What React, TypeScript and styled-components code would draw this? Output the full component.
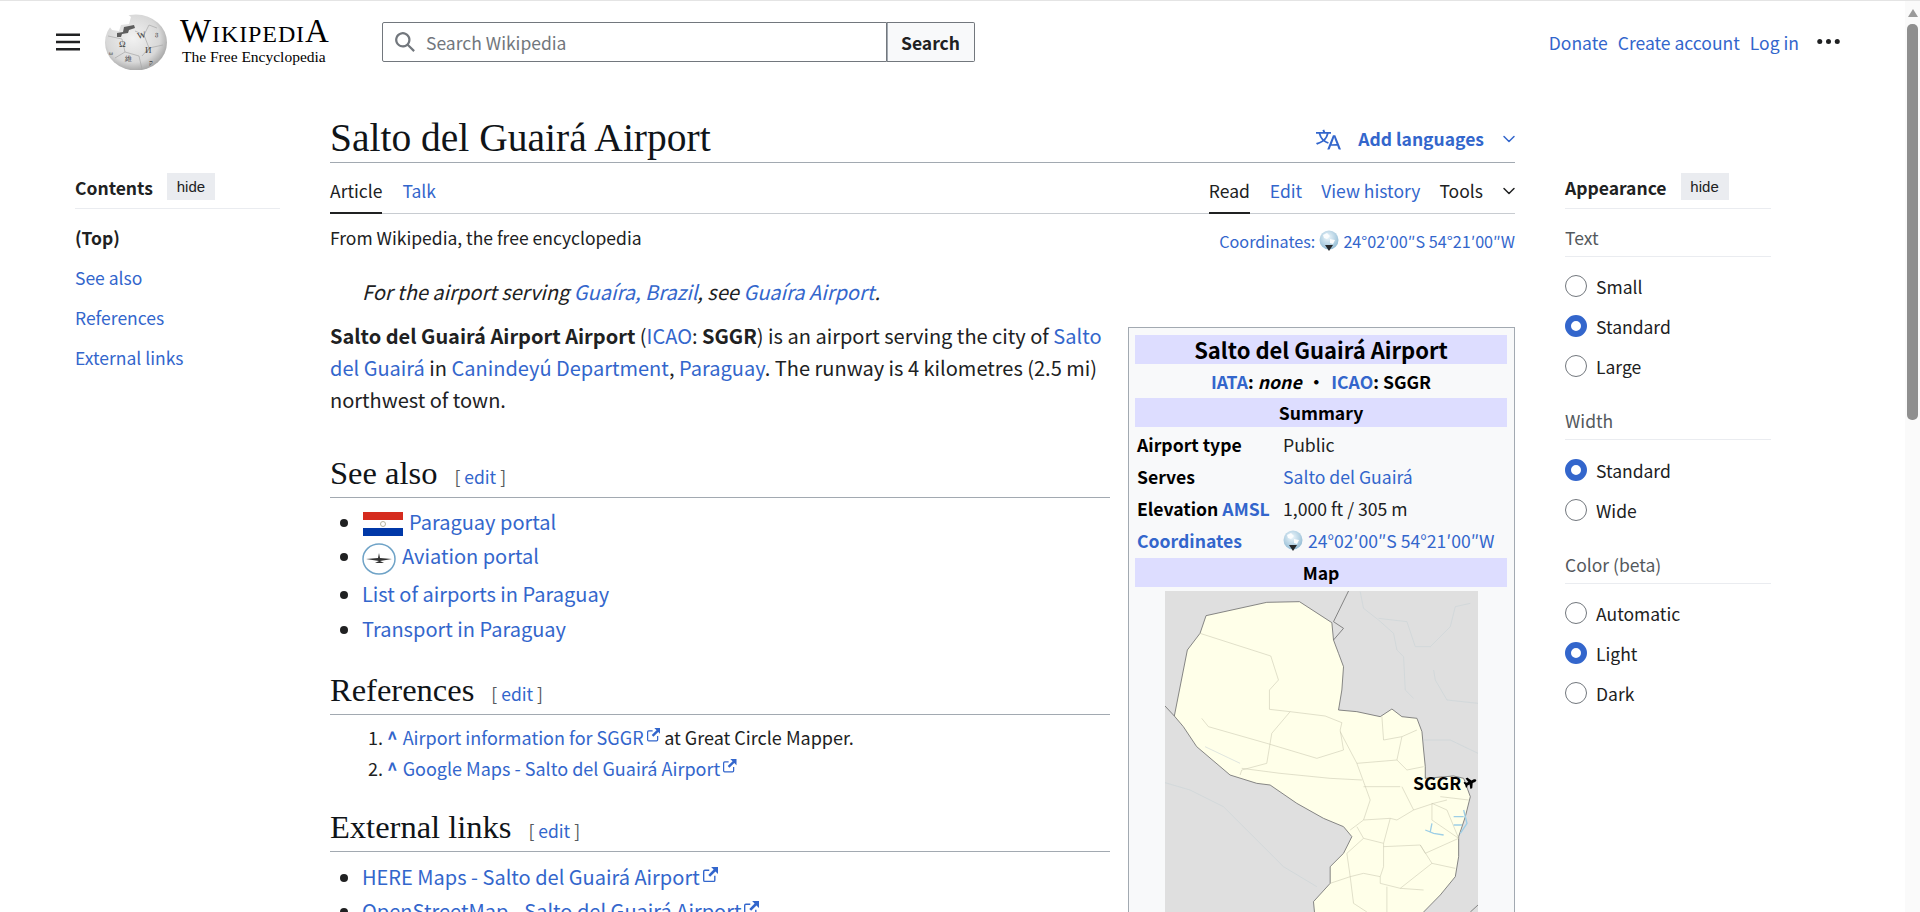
import styled, { createGlobalStyle } from 'styled-components';
import { ChevronDown } from 'lucide-react';
import { FaPlane } from 'react-icons/fa';

const sans = `"Noto Sans CJK SC", "Noto Sans", sans-serif`;
const serif = `"Liberation Serif", "DejaVu Serif", serif`;
const link = '#3366cc';
const ink = '#202122';

const GlobalStyle = createGlobalStyle`
  html, body {
    margin: 0;
    padding: 0;
    height: 912px;
    overflow: hidden;
    background: #fff;
  }
  body {
    font-family: ${sans};
    color: ${ink};
    font-size: 20px;
  }
  a {
    color: ${link};
    text-decoration: none;
  }
`;

const Shell = styled.div`
  display: flex;
  height: 912px;
  overflow: hidden;
  border-top: 1px solid #e4e4e4;
  box-sizing: border-box;
`;

const Page = styled.div`
  flex: 1;
  min-width: 0;
  overflow: hidden;
`;

const Scrollbar = styled.div`
  width: 15px;
  flex: none;
  background: #fafafa;
  display: flex;
  flex-direction: column;
  align-items: center;
`;

const ScrollArrow = styled.div`
  margin-top: 8px;
  width: 0;
  height: 0;
  border-left: 5px solid transparent;
  border-right: 5px solid transparent;
  border-bottom: 8px solid #9a9a9a;
`;

const ScrollThumb = styled.div`
  margin-top: 7px;
  width: 11px;
  height: 396px;
  border-radius: 5px;
  background: #8f8f8f;
`;

const Header = styled.header`
  height: 81px;
  display: flex;
  align-items: flex-start;
  padding: 0 64px 0 56px;
`;

const MenuIcon = styled.svg`
  width: 24px;
  height: 24px;
  margin-top: 29px;
  flex: none;
`;

const Logo = styled.a`
  display: flex;
  margin-left: 25px;
  margin-top: 13px;
  color: #000;
`;

const Wordmark = styled.div`
  width: 150px;
  margin-left: 13px;
  font-family: ${serif};
  color: #000;
`;

const WordmarkTitle = styled.div`
  font-size: 24px;
  line-height: 28px;
  margin-top: 3px;
  letter-spacing: 0.9px;
  white-space: nowrap;
`;

const WordmarkCap = styled.span`
  font-size: 33px;
`;

const WordmarkTag = styled.div`
  font-size: 15.500px;
  line-height: 20px;
  margin-left: 2px;
  margin-top: -1px;
  white-space: nowrap;
`;

const SearchBox = styled.form`
  display: flex;
  width: 593px;
  height: 40px;
  margin: 21px 0 0 52px;
`;

const SearchField = styled.div`
  flex: 1;
  display: flex;
  align-items: center;
  gap: 10px;
  padding-left: 11px;
  border: 1px solid #72777d;
  border-radius: 2px 0 0 2px;
  color: #72777d;
  font-size: 17.500px;
`;

const SearchButton = styled.button`
  width: 88px;
  border: 1px solid #72777d;
  border-left: none;
  border-radius: 0 2px 2px 0;
  background: #f8f9fa;
  color: ${ink};
  font-family: ${sans};
  font-weight: 700;
  font-size: 17.500px;
  padding: 0;
  box-shadow: inset 1px 0 0 #a2a9b1;
`;

const UserLinks = styled.nav`
  margin-left: auto;
  margin-top: 27px;
  display: flex;
  align-items: center;
  font-size: 17.500px;
  line-height: 30px;
`;

const UserLink = styled.a`
  margin-right: 10px;
`;

const Dots = styled.svg`
  width: 25px;
  height: 25px;
  margin-left: 7px;
  margin-top: -4px;
`;

const Columns = styled.div`
  display: flex;
  padding-left: 75px;
  gap: 50px;
  align-items: flex-start;
`;

const Sidebar = styled.aside<{ $width: number }>`
  width: ${(p) => p.$width}px;
  flex: none;
  padding-top: 91px;
  font-size: 17.500px;
`;

const SideHead = styled.div`
  display: flex;
  align-items: center;
  gap: 14px;
  height: 27px;
  padding-bottom: 8px;
  border-bottom: 1px solid #eaecf0;
`;

const SideTitle = styled.span`
  font-weight: 700;
  line-height: 27px;
  padding-top: 2px;
`;

const HideButton = styled.span`
  width: 48px;
  height: 27px;
  display: flex;
  justify-content: center;
  align-items: flex-start;
  background: #eaecf0;
  font-family: "Liberation Sans", sans-serif;
  font-size: 15px;
  line-height: 27px;
`;

const TocList = styled.div`
  margin-top: 9px;
`;

const TocItem = styled.a<{ $top?: boolean }>`
  display: block;
  height: 40px;
  line-height: 40px;
  color: ${(p) => (p.$top ? ink : link)};
  font-weight: ${(p) => (p.$top ? 700 : 400)};
`;

const Main = styled.main`
  width: 1185px;
  flex: none;
`;

const TitleRow = styled.div`
  height: 80px;
  display: flex;
  align-items: flex-end;
  border-bottom: 1px solid #a2a9b1;
`;

const PageTitle = styled.h1`
  margin: 0 0 1px;
  font-family: ${serif};
  font-weight: 400;
  font-size: 39.500px;
  line-height: 46px;
  color: #101418;
`;

const LangButton = styled.a`
  margin-left: auto;
  margin-right: -4px;
  display: flex;
  align-items: center;
  font-weight: 700;
  font-size: 17.500px;
  line-height: 30px;
  padding-bottom: 8px;
`;

const LangIcon = styled.svg`
  width: 25px;
  height: 25px;
  fill: ${link};
`;

const LangLabel = styled.span`
  margin: 0 15px 0 17px;
`;

const TabRow = styled.div`
  display: flex;
  height: 50px;
  border-bottom: 1px solid #c8ccd1;
  font-size: 17.500px;
`;

const Tab = styled.a<{ $active?: boolean; $dark?: boolean; $gap?: number }>`
  display: flex;
  align-items: center;
  padding-top: 6px;
  margin-right: ${(p) => p.$gap ?? 19}px;
  margin-bottom: -1px;
  color: ${(p) => (p.$active || p.$dark ? ink : link)};
  border-bottom: 2px solid ${(p) => (p.$active ? ink : 'transparent')};
`;

const TabGap = styled.div`
  flex: 1;
`;

const ToolsTab = styled(Tab)`
  margin-right: -4px;
  gap: 16px;
`;

const SubRow = styled.div`
  display: flex;
  justify-content: space-between;
  height: 50px;
  padding-top: 9px;
  box-sizing: border-box;
  font-size: 17.500px;
  line-height: 30px;
`;

const Coords = styled.a`
  display: flex;
  align-items: center;
  gap: 4px;
  height: 36px;
  font-size: 16.200px;
`;

const Hatnote = styled.div`
  font-style: italic;
  line-height: 32.500px;
  padding: 12px 0 11px 32px;
`;

const Infobox = styled.div`
  float: right;
  width: 387px;
  box-sizing: border-box;
  margin: 7px 0 0 18px;
  padding: 7px 7px 0 6px;
  height: 900px;
  background: #f8f9fa;
  border: 1px solid #a2a9b1;
  color: #000;
  font-size: 17.600px;
`;

const Band = styled.div<{ $big?: boolean }>`
  height: 29px;
  background: #ddddff;
  text-align: center;
  font-weight: 700;
  line-height: 29px;
  font-size: ${(p) => (p.$big ? 22 : 17.6)}px;
`;

const CodeLine = styled.div`
  height: 34px;
  line-height: 35px;
  text-align: center;
  font-weight: 700;
`;

const NoneText = styled.i`
  font-weight: 700;
`;

const CodeDot = styled.span`
  margin: 0 6px;
`;

const InfoRows = styled.div`
  margin: 2px 0 1px;
`;

const InfoRow = styled.div`
  display: flex;
  height: 32px;
  line-height: 32px;
  padding-left: 2px;
`;

const InfoLabel = styled.div`
  width: 146px;
  flex: none;
  font-weight: 700;
  white-space: nowrap;
`;

const InfoValue = styled.div`
  display: flex;
  align-items: center;
  gap: 5px;
  white-space: nowrap;
  color: ${ink};
`;

const MapFrame = styled.div`
  position: relative;
  width: 313px;
  margin: 4px 0 0 30px;
`;

const MapSvg = styled.svg`
  display: block;
  width: 313px;
  height: 340px;
`;

const MapPin = styled.div`
  position: absolute;
  left: 248px;
  top: 179px;
  display: flex;
  align-items: center;
  gap: 3px;
  font-weight: 700;
  font-size: 17.600px;
  line-height: 26px;
  color: #000;
`;

const PinPlane = styled(FaPlane)`
  transform: rotate(-25deg);
`;

const Paragraph = styled.p`
  margin: 0 0 36px;
  line-height: 32px;
`;

const Heading = styled.h2`
  margin: 23px 0 0;
  height: 45px;
  overflow: hidden;
  border-bottom: 1px solid #a2a9b1;
  font-family: ${serif};
  font-weight: 400;
  font-size: 32.500px;
  line-height: 42px;
  color: #101418;
`;

const EditLink = styled.span`
  font-family: ${sans};
  font-size: 17.500px;
  margin-left: 17px;
  color: #54595d;
`;

const BulletList = styled.ul<{ $top?: number }>`
  margin: ${(p) => p.$top ?? 8}px 0 0;
  padding: 0 0 0 32px;
  line-height: 32.500px;
  list-style: disc;
`;

const Bullet = styled.li<{ $gap?: number }>`
  margin-bottom: ${(p) => p.$gap ?? 2}px;
`;

const RefList = styled.ol`
  margin: 8px 0 3px;
  padding: 0 0 0 57px;
  font-size: 18px;
  line-height: 29px;
`;

const RefItem = styled.li`
  margin-bottom: 2px;
`;

const Caret = styled.a`
  font-weight: 700;
  margin-right: 5px;
`;

const InlineIcon = styled.svg<{ $left?: number; $right?: number }>`
  vertical-align: middle;
  margin-left: ${(p) => p.$left ?? 0}px;
  margin-right: ${(p) => p.$right ?? 0}px;
`;

const ExtIcon = styled.svg`
  width: 0.750em;
  height: 0.750em;
  margin-left: 3px;
  vertical-align: 0.150em;
`;

const RadioRow = styled.label`
  display: flex;
  align-items: center;
  gap: 9px;
  height: 40px;
`;

const RadioDot = styled.span<{ $on?: boolean }>`
  width: 22px;
  height: 22px;
  box-sizing: border-box;
  border-radius: 50%;
  background: #fff;
  border: ${(p) => (p.$on ? `6.5px solid ${link}` : '1px solid #72777d')};
`;

const GroupLabel = styled.div`
  padding: 15px 0 6px;
  line-height: 26px;
  color: #54595d;
  border-bottom: 1px solid #eaecf0;
  box-sizing: border-box;
  height: 47px;
`;

const Group = styled.div<{ $top: number }>`
  margin-top: ${(p) => p.$top}px;
`;

const RadioList = styled.div<{ $top?: number }>`
  margin-top: ${(p) => p.$top ?? 9}px;
`;

const ExternalIcon = () => (
  <ExtIcon viewBox="0 0 12 12" fill={link}>
    <path d="M6.500 0H12v5.500L10 3.500 5.700 7.800 4.200 6.300 8.500 2zM1.500 2H5v1.100H1.500a.4.4 0 00-.4.4v7a.4.4 0 00.4.4h7a.4.4 0 00.4-.4V7H10v3.500A1.500 1.500 0 018.500 12h-7A1.500 1.500 0 010 10.500v-7A1.500 1.500 0 011.500 2z" />
  </ExtIcon>
);

const CoordGlobe = () => (
  <svg width="20" height="22" viewBox="0 0 20 22">
    <defs>
      <radialGradient id="coordGlobe" cx="0.45" cy="0.35" r="0.7">
        <stop offset="0" stopColor="#eef7fc" />
        <stop offset="1" stopColor="#8db8d2" />
      </radialGradient>
    </defs>
    <circle cx="10" cy="10" r="9.500" fill="url(#coordGlobe)" />
    <path d="M4 5l4-2 3 3-3 3-3-1zM11 9l5 1-2 4-3-1z" fill="#fbfdfe" />
    <path d="M6 15h8l-4 6z" fill="#26292c" />
  </svg>
);

const WikiGlobe = () => (
  <svg width="62" height="56" viewBox="0 0 62 56">
    <defs>
      <radialGradient id="wikiGlobe" cx="0.45" cy="0.42" r="0.62">
        <stop offset="0" stopColor="#f2f2f2" />
        <stop offset="0.7" stopColor="#d8d8d8" />
        <stop offset="1" stopColor="#9d9d9d" />
      </radialGradient>
    </defs>
    <ellipse cx="31" cy="28.500" rx="31" ry="28" fill="url(#wikiGlobe)" />
    <path d="M10 3l12-3 4 3-2 7-8 1-2 6-7-1-3-4z" fill="#fff" />
    <path d="M12 19l6-1 1-5 10-2 1 3-6 2-1 3-6 1-1 3h-4z" fill="#5e5e5e" />
    <path d="M3 22l14 3 3 13 14 4 3 13M30 17l9 4 5 13 14-3M44 34l-7 8M20 38l-10 6M39 21l5-10 8 3" stroke="#a8a8a8" strokeWidth="0.700" fill="none" />
    <g fontFamily={serif} fill="#3e3e3e" fontSize="9">
      <text x="14" y="33">Ω</text>
      <text x="33" y="25" transform="rotate(-12 33 25)">W</text>
      <text x="40" y="39">И</text>
      <text x="20" y="47" fontSize="7">維</text>
      <text x="44" y="51" fontSize="7">ק</text>
      <text x="4" y="41" fontSize="6">ω</text>
      <text x="50" y="22" fontSize="6">ვ</text>
    </g>
  </svg>
);

const paraguay =
  'M133 378L172 180 210 130 228 77 410 37 508 35 605 98 610 150 625 190 640 230 635 300 625 360 680 365 750 380 785 357 815 380 860 385 875 425 880 480 885 530 885 565 970 558 1000 565 1020 620 1005 680 985 740 985 800 975 860 930 915 880 966 860 1040 560 1040 550 935 600 880 600 830 640 790 665 740 640 710 580 685 500 640 420 585 380 580 300 555 200 470 160 410z';

const regions = [
  'M210 130L422 198 445 270 418 300 418 358 480 365 585 378 635 398',
  'M480 365L425 430 410 520 335 540 330 555',
  'M215 385L235 410 410 460 560 505 640 480 630 420 635 398',
  'M335 535L450 550 600 565 695 570',
  'M630 425L680 520 720 630 700 690 660 720',
  'M680 520L800 510 815 440 760 450 755 380M815 440L860 420',
  'M800 510L830 540 880 530M700 590L810 590M815 590L850 660 910 640 950 630M930 620L1015 630',
  'M700 690L780 685 800 690 850 660M780 685L760 760 700 745 680 710M760 760L760 830 750 860 700 850 660 860 650 790 700 745',
  'M760 770L870 765 905 820 810 895 750 880 750 860M905 820L975 835M870 765L885 790 985 745 950 660 905 640 905 690 985 745',
  'M660 860L600 880M660 860L670 940 710 966M770 890L770 966 M880 900L810 895',
];

const rivers = [
  'M690 5L700 55 745 90 790 130 800 180 820 200 825 300 850 325M745 85L830 95 855 170 900 170 960 110 975 50 1020 40',
  'M910 240L915 270 950 330 1043 340M880 450L960 450 1043 490',
  'M105 578L180 600 280 650 390 760 460 830 560 890M225 470L330 520',
];

const water = ['M885 720L910 730 940 735M1000 660L1010 700 990 730M970 680L1000 680M970 705L995 705M905 700L900 725'];

const TextRadio = ({ label, on }: { label: string; on?: boolean }) => (
  <RadioRow>
    <RadioDot $on={on} />
    {label}
  </RadioRow>
);

const App = () => (
  <>
    <GlobalStyle />
    <Shell>
      <Page>
        <Header>
          <MenuIcon viewBox="0 0 20 20" fill={ink}>
            <path d="M0 3v2h20V3zm0 8h20V9H0zm0 6h20v-2H0z" />
          </MenuIcon>
          <Logo href="#">
            <WikiGlobe />
            <Wordmark>
              <WordmarkTitle>
                <WordmarkCap>W</WordmarkCap>IKIPEDI<WordmarkCap>A</WordmarkCap>
              </WordmarkTitle>
              <WordmarkTag>The Free Encyclopedia</WordmarkTag>
            </Wordmark>
          </Logo>
          <SearchBox>
            <SearchField>
              <svg width="22" height="22" viewBox="0 0 20 20" fill="#72777d">
                <path d="M12.200 13.600a7 7 0 111.400-1.400l5.400 5.400-1.400 1.400zM3 8a5 5 0 1010 0A5 5 0 003 8" />
              </svg>
              Search Wikipedia
            </SearchField>
            <SearchButton type="button">Search</SearchButton>
          </SearchBox>
          <UserLinks>
            <UserLink href="#">Donate</UserLink>
            <UserLink href="#">Create account</UserLink>
            <UserLink href="#">Log in</UserLink>
            <Dots viewBox="0 0 20 20" fill={ink}>
              <circle cx="3" cy="10" r="2" />
              <circle cx="10" cy="10" r="2" />
              <circle cx="17" cy="10" r="2" />
            </Dots>
          </UserLinks>
        </Header>
        <Columns>
          <Sidebar $width={205}>
            <SideHead>
              <SideTitle>Contents</SideTitle>
              <HideButton>hide</HideButton>
            </SideHead>
            <TocList>
              <TocItem $top>(Top)</TocItem>
              <TocItem href="#">See also</TocItem>
              <TocItem href="#">References</TocItem>
              <TocItem href="#">External links</TocItem>
            </TocList>
          </Sidebar>

          <Main>
            <TitleRow>
              <PageTitle>Salto del Guairá Airport</PageTitle>
              <LangButton href="#">
                <LangIcon viewBox="0 0 20 20">
                  <path d="M20 18h-1.440a.61.61 0 01-.4-.12.81.81 0 01-.23-.31L17 15h-5l-1 2.540a.77.77 0 01-.22.3.59.59 0 01-.4.14H9l4.550-11.470h1.890zm-3.530-4.310L14.890 9.500a11.620 11.620 0 01-.39-1.240q-.09.37-.19.69l-.19.56-1.580 4.190zm-6.300-1.580a13.430 13.430 0 01-2.910-1.410 11.460 11.460 0 002.810-5.370H12V4H7.310a4 4 0 00-.2-.56C6.870 2.790 6.600 2 6.600 2l-1.470.5s.4.890.6 1.500H0v1.330h2.150A11.230 11.230 0 005 10.700a17.190 17.190 0 01-5 2.100q.56.82.87 1.380a23.280 23.280 0 005.220-2.510 15.640 15.640 0 003.560 1.770zM3.630 5.330h4.910a8.110 8.110 0 01-2.450 4.450 9.110 9.110 0 01-2.460-4.450z" />
                </LangIcon>
                <LangLabel>Add languages</LangLabel>
                <ChevronDown size={20} strokeWidth={1.800} />
              </LangButton>
            </TitleRow>
            <TabRow>
              <Tab $active $gap={20}>Article</Tab>
              <Tab href="#">Talk</Tab>
              <TabGap />
              <Tab $active $gap={20}>Read</Tab>
              <Tab href="#">Edit</Tab>
              <Tab href="#">View history</Tab>
              <ToolsTab $dark>
                Tools
                <ChevronDown size={20} strokeWidth={1.800} />
              </ToolsTab>
            </TabRow>
            <SubRow>
              <span>From Wikipedia, the free encyclopedia</span>
              <Coords href="#">
                Coordinates:
                <CoordGlobe />
                24°02′00″S 54°21′00″W
              </Coords>
            </SubRow>
            <Hatnote>
              For the airport serving <a href="#">Guaíra, Brazil</a>, see <a href="#">Guaíra Airport</a>.
            </Hatnote>

            <Infobox>
              <Band $big>Salto del Guairá Airport</Band>
              <CodeLine>
                <a href="#">IATA</a>: <NoneText>none</NoneText>
                <CodeDot>•</CodeDot>
                <a href="#">ICAO</a>: SGGR
              </CodeLine>
              <Band>Summary</Band>
              <InfoRows>
                <InfoRow>
                  <InfoLabel>Airport type</InfoLabel>
                  <InfoValue>Public</InfoValue>
                </InfoRow>
                <InfoRow>
                  <InfoLabel>Serves</InfoLabel>
                  <InfoValue>
                    <a href="#">Salto del Guairá</a>
                  </InfoValue>
                </InfoRow>
                <InfoRow>
                  <InfoLabel>
                    Elevation <a href="#">AMSL</a>
                  </InfoLabel>
                  <InfoValue>1,000 ft / 305 m</InfoValue>
                </InfoRow>
                <InfoRow>
                  <InfoLabel>
                    <a href="#">Coordinates</a>
                  </InfoLabel>
                  <InfoValue>
                    <CoordGlobe />
                    <a href="#">24°02′00″S 54°21′00″W</a>
                  </InfoValue>
                </InfoRow>
              </InfoRows>
              <Band>Map</Band>
              <MapFrame>
                <MapSvg viewBox="105 3 938 1020" preserveAspectRatio="none">
                  <rect x="105" y="3" width="938" height="1020" fill="#dfdfdf" />
                  <path d={paraguay} fill="#ffffe9" stroke="#707070" strokeWidth="2.500" strokeLinejoin="round" />
                  <path d="M105 348L133 378M655 3L610 95 640 115 610 150M1043 945L1020 966" stroke="#707070" strokeWidth="2.500" fill="none" />
                  {regions.map((d) => (
                    <path key={d} d={d} stroke="#c6c4ae" strokeWidth="1.600" fill="none" />
                  ))}
                  {rivers.map((d) => (
                    <path key={d} d={d} stroke="#cad3d7" strokeWidth="1.800" fill="none" />
                  ))}
                  {water.map((d) => (
                    <path key={d} d={d} stroke="#9dcee6" strokeWidth="4" fill="none" />
                  ))}
                </MapSvg>
                <MapPin>
                  SGGR
                  <PinPlane size={13} />
                </MapPin>
              </MapFrame>
            </Infobox>

            <Paragraph>
              <b>Salto del Guairá Airport Airport</b> (<a href="#">ICAO</a>: <b>SGGR</b>) is an airport serving the city
              of <a href="#">Salto del Guairá</a> in <a href="#">Canindeyú Department</a>, <a href="#">Paraguay</a>. The
              runway is 4 kilometres (2.5 mi) northwest of town.
            </Paragraph>

            <Heading>
              See also
              <EditLink>
                [ <a href="#">edit</a> ]
              </EditLink>
            </Heading>
            <BulletList>
              <Bullet $gap={2}>
                <InlineIcon width="40" height="24" viewBox="0 0 40 24" $left={1} $right={6}>
                  <rect width="40" height="8" fill="#d52b1e" />
                  <rect y="8" width="40" height="8" fill="#fff" />
                  <rect y="16" width="40" height="8" fill="#0038a8" />
                  <circle cx="20" cy="12" r="2.500" fill="none" stroke="#b5b5a0" />
                </InlineIcon>
                <a href="#">Paraguay portal</a>
              </Bullet>
              <Bullet $gap={3}>
                <InlineIcon width="34" height="32" viewBox="0 0 34 32" $right={6}>
                  <ellipse cx="17" cy="16" rx="16" ry="15" fill="#fff" stroke="#6fa3c7" strokeWidth="1.500" />
                  <path d="M4 16l12-1 1-5 1 5 12 1-12 2 4 2H13l4-2z" fill="#333" />
                </InlineIcon>
                <a href="#">Aviation portal</a>
              </Bullet>
              <Bullet $gap={3}>
                <a href="#">List of airports in Paraguay</a>
              </Bullet>
              <Bullet $gap={1}>
                <a href="#">Transport in Paraguay</a>
              </Bullet>
            </BulletList>

            <Heading>
              References
              <EditLink>
                [ <a href="#">edit</a> ]
              </EditLink>
            </Heading>
            <RefList>
              <RefItem>
                <Caret href="#">^</Caret>
                <a href="#">
                  Airport information for SGGR
                  <ExternalIcon />
                </a>{' '}
                at Great Circle Mapper.
              </RefItem>
              <RefItem>
                <Caret href="#">^</Caret>
                <a href="#">
                  Google Maps - Salto del Guairá Airport
                  <ExternalIcon />
                </a>
              </RefItem>
            </RefList>

            <Heading>
              External links
              <EditLink>
                [ <a href="#">edit</a> ]
              </EditLink>
            </Heading>
            <BulletList $top={9}>
              <Bullet>
                <a href="#">
                  HERE Maps - Salto del Guairá Airport
                  <ExternalIcon />
                </a>
              </Bullet>
              <Bullet>
                <a href="#">
                  OpenStreetMap - Salto del Guairá Airport
                  <ExternalIcon />
                </a>
              </Bullet>
            </BulletList>
          </Main>

          <Sidebar $width={206}>
            <SideHead>
              <SideTitle>Appearance</SideTitle>
              <HideButton>hide</HideButton>
            </SideHead>
            <Group $top={1}>
              <GroupLabel>Text</GroupLabel>
              <RadioList>
                <TextRadio label="Small" />
                <TextRadio label="Standard" on />
                <TextRadio label="Large" />
              </RadioList>
            </Group>
            <Group $top={7}>
              <GroupLabel>Width</GroupLabel>
              <RadioList $top={10}>
                <TextRadio label="Standard" on />
                <TextRadio label="Wide" />
              </RadioList>
            </Group>
            <Group $top={7}>
              <GroupLabel>Color (beta)</GroupLabel>
              <RadioList>
                <TextRadio label="Automatic" />
                <TextRadio label="Light" on />
                <TextRadio label="Dark" />
              </RadioList>
            </Group>
          </Sidebar>
        </Columns>
      </Page>
      <Scrollbar>
        <ScrollArrow />
        <ScrollThumb />
      </Scrollbar>
    </Shell>
  </>
);

export default App;
